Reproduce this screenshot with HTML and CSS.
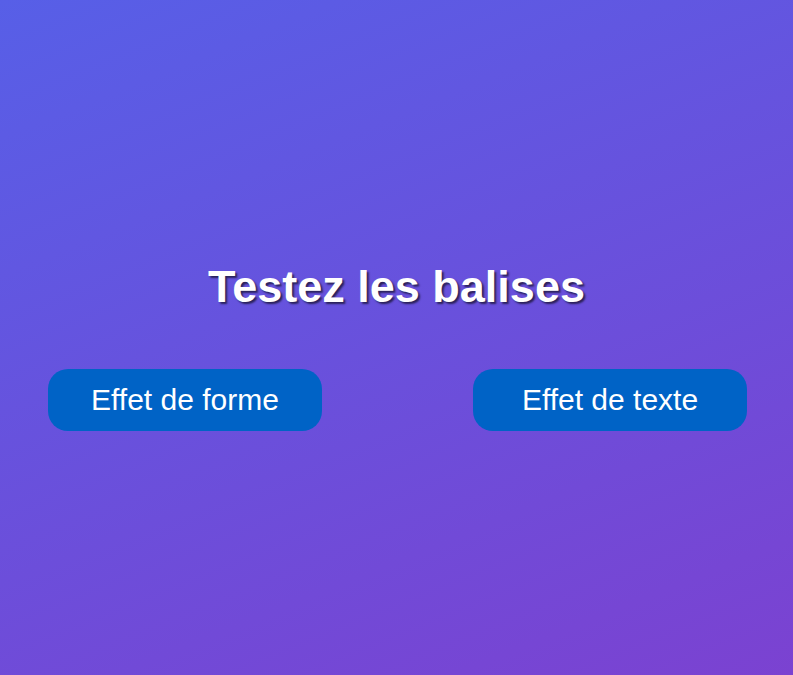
FILE: index.html
```html
<!DOCTYPE html>
<html lang="fr">
<head>
<meta charset="utf-8">
<link rel="stylesheet" href="styles.css">
</head>
<body>
<main class="page">
  <h1 class="title">Testez les balises</h1>
  <div class="actions">
    <button class="btn">Effet de forme</button>
    <button class="btn">Effet de texte</button>
  </div>
</main>
</body>
</html>
```
FILE: styles.css
```css
html, body {
  margin: 0;
  height: 100%;
}
body {
  background: linear-gradient(158deg, #575fe7 0%, #7b42d1 100%);
  font-family: "Liberation Sans", Arial, sans-serif;
  color: #fff;
}
.page {
  height: 675px;
  box-sizing: border-box;
  padding-top: 258px;
}
.title {
  margin: 0;
  text-align: center;
  font-size: 45px;
  font-weight: bold;
  line-height: 58px;
  text-shadow: 2px 2px 2px rgba(0,0,0,0.6);
}
.actions {
  display: flex;
  justify-content: space-between;
  padding: 0 46px 0 48px;
  margin-top: 53px;
}
.btn {
  width: 274px;
  height: 62px;
  border: none;
  border-radius: 20px;
  background: #0063c6;
  color: #fff;
  font-family: "Liberation Sans", Arial, sans-serif;
  font-size: 30px;
  padding: 0;
}
```
